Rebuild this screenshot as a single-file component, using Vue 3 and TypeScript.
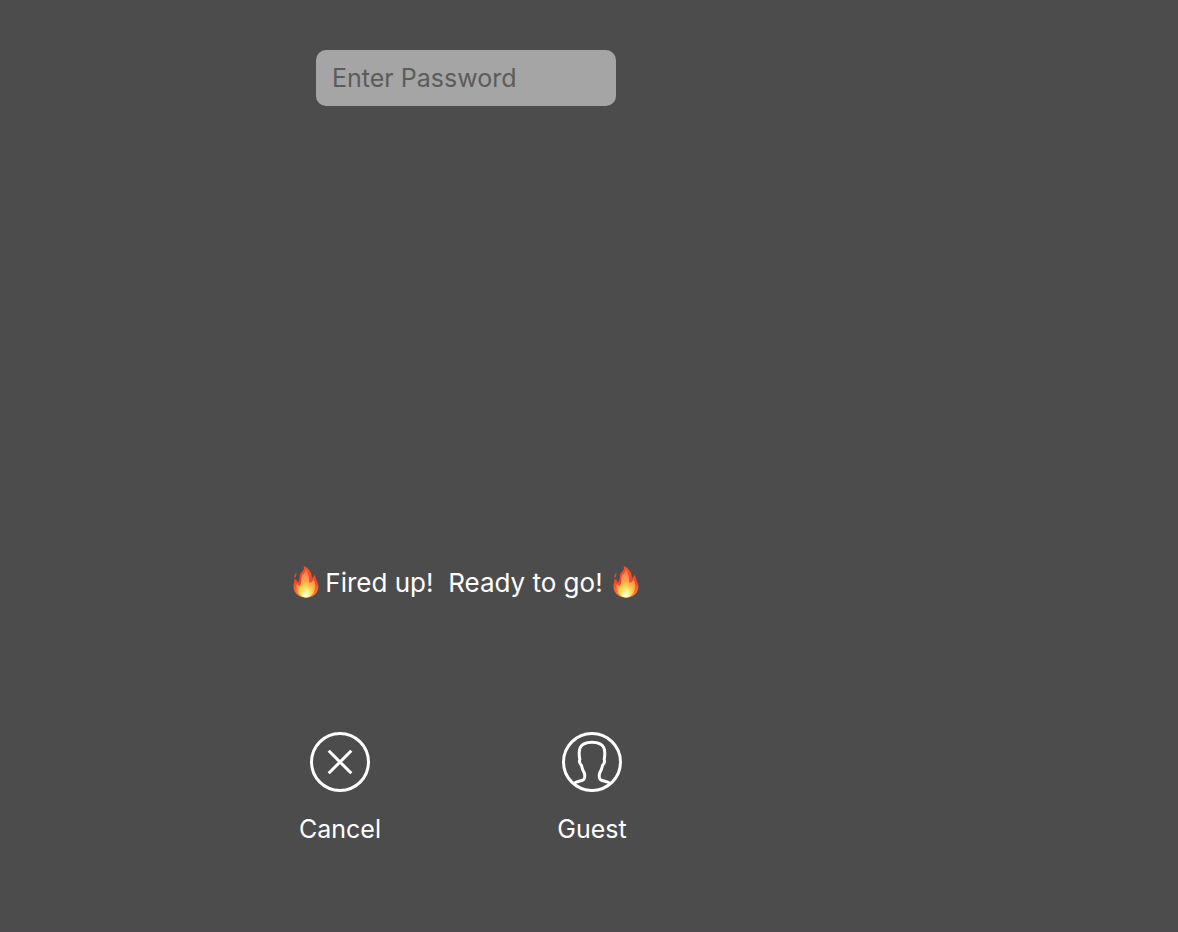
<script setup lang="ts">
import { ref } from 'vue'

const password = ref<string>('')
</script>

<template>
  <main class="screen">
    <form class="login" @submit.prevent>
      <input
        v-model="password"
        class="password"
        type="password"
        placeholder="Enter Password"
        aria-label="Enter Password"
      />

      <svg class="defs" aria-hidden="true">
        <defs>
          <linearGradient id="flame-outer" x1="0" y1="0" x2="0" y2="1">
            <stop offset="0" stop-color="#f0562c" />
            <stop offset="0.5" stop-color="#fb4226" />
            <stop offset="1" stop-color="#fb8a30" />
          </linearGradient>
          <radialGradient id="flame-inner" cx="0.5" cy="0.94" r="0.92">
            <stop offset="0" stop-color="#fffff4" />
            <stop offset="0.16" stop-color="#fffaa8" />
            <stop offset="0.34" stop-color="#ffd850" />
            <stop offset="0.55" stop-color="#ffab4e" />
            <stop offset="1" stop-color="#fb6e3c" />
          </radialGradient>
          <symbol id="flame" viewBox="0 0 26 32">
            <path
              fill="url(#flame-outer)"
              d="M10.500 0C15.500 1.500 19 6.500 19 12C20.500 11 21.200 10 21 8.500C23.500 11 22.800 13.500 24.200 16C26 19.500 25.800 23 23.700 26.500C21.500 30 17.500 31.500 13 31.500C8.500 31.500 4.500 30 2.300 26.500C.2 23 .2 20 .8 17C1.200 15.200 1.500 14.500 1.500 13C3.500 13.500 4.500 14.800 5 16.500C7.200 14 6.500 11.500 7 9C7.500 6 12.500 4.500 10.500 0Z"
            />
            <path fill="#f4442a" d="M4.200 6.500C1.800 7.300 .7 9.500 1.800 12C4 11 2.500 8.500 4.200 6.500Z" />
            <path
              fill="url(#flame-inner)"
              d="M12.500 3C16.500 8 15.500 12 16.500 17C19 16 20.200 14.800 20.500 13C22.800 17 22.800 21.500 21.300 25C19.800 29 17 31.500 13 31.500C9 31.500 6 29 4.700 25.500C3.500 22.500 3.300 20.500 3.800 18C5 18.500 5.700 19.500 6.200 20.500C9 17.500 8 14.500 8.500 11C9 8 13 7.500 12.500 3Z"
            />
          </symbol>
        </defs>
      </svg>

      <p class="message">
        <svg class="flame" aria-hidden="true"><use href="#flame" /></svg>
        <span class="motto">Fired up!&nbsp; Ready to go!</span>
        <svg class="flame" aria-hidden="true"><use href="#flame" /></svg>
      </p>

      <div class="actions">
        <button class="action" type="button">
          <svg class="icon" viewBox="0 0 60 60" aria-hidden="true">
            <circle cx="30" cy="30" r="28.500" />
            <path d="M18.700 18.700L41.300 41.300M41.300 18.700L18.700 41.300" />
          </svg>
          <span>Cancel</span>
        </button>
        <button class="action" type="button">
          <svg class="icon" viewBox="0 0 60 60" aria-hidden="true">
            <circle cx="30" cy="30" r="28.500" />
            <path
              d="M12.300 51.300C14 49 20 49.500 22 47.200C23.200 45.500 22.700 42.500 22.300 41C20.500 38.500 20 36 19.500 33.500C18 32 17 29.500 17.800 27.500C17 23 16.700 19 18.200 15.700C20 12 25 10.300 30 10.300C35 10.300 40 12 41.800 15.700C43.300 19 43 23 42.200 27.500C43 29.500 42 32 40.500 33.500C40 36 39.500 38.500 37.700 41C37.300 42.500 36.800 45.500 38 47.200C40 49.500 46 49 47.700 51.300"
            />
          </svg>
          <span>Guest</span>
        </button>
      </div>
    </form>
  </main>
</template>

<style>
body {
  margin: 0;
  background: #4c4c4c;
}
</style>

<style scoped>
.screen {
  box-sizing: border-box;
  min-height: 100vh;
  padding: 50px 246px 0 0;
  border-bottom: 1px solid #524a50;
  background: #4c4c4c;
  color: #fff;
  font-family: Inter, "Liberation Sans", sans-serif;
  font-size: 25px;
  line-height: 32px;
}

.login {
  display: flex;
  flex-direction: column;
  align-items: center;
}

.defs {
  position: absolute;
  width: 0;
  height: 0;
}

.password {
  box-sizing: border-box;
  width: 300px;
  height: 56px;
  padding: 0 16px;
  border: 0;
  border-radius: 10px;
  outline: 0;
  background: #a5a5a5;
  color: #333;
  font: inherit;
}

.password::placeholder {
  color: #5c5c5c;
  opacity: 1;
}

.message {
  display: flex;
  align-items: flex-start;
  margin: 460px 0 0;
  font-size: 26px;
}

.flame {
  width: 26px;
  height: 32px;
}

.motto {
  margin: 0 10px 0 6px;
  line-height: 34px;
  white-space: nowrap;
}

.actions {
  display: flex;
  gap: 112px;
  margin-top: 132px;
}

.action {
  display: flex;
  flex-direction: column;
  align-items: center;
  gap: 21px;
  width: 140px;
  padding: 0;
  border: 0;
  background: none;
  color: inherit;
  font: inherit;
  cursor: pointer;
}

.icon {
  width: 60px;
  height: 60px;
  fill: none;
  stroke: #fff;
  stroke-width: 3;
}
</style>
